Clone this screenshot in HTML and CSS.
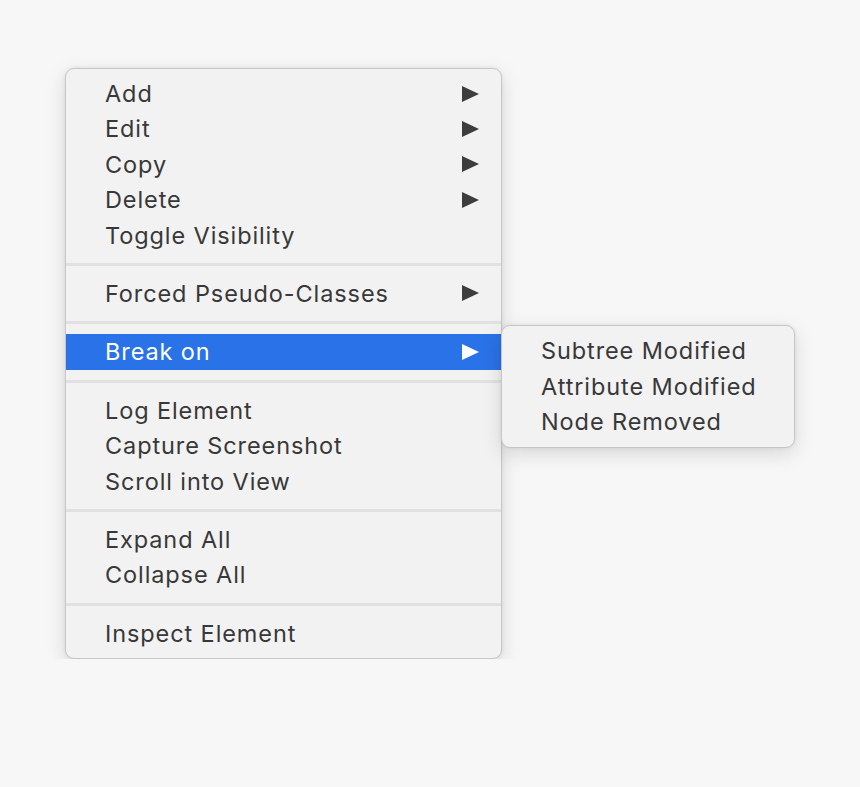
FILE: index.html
```html
<!DOCTYPE html>
<html>
<head>
<meta charset="utf-8">
<link rel="stylesheet" href="styles.css">
</head>
<body>
<div class="stage">
  <div class="menu">
    <div class="item">Add<span class="arrow"></span></div>
    <div class="item">Edit<span class="arrow"></span></div>
    <div class="item">Copy<span class="arrow"></span></div>
    <div class="item">Delete<span class="arrow"></span></div>
    <div class="item">Toggle Visibility</div>
    <div class="sep"></div>
    <div class="item">Forced Pseudo-Classes<span class="arrow"></span></div>
    <div class="sep"></div>
    <div class="item active">Break on<span class="arrow"></span>
      <div class="submenu">
        <div class="item">Subtree Modified</div>
        <div class="item">Attribute Modified</div>
        <div class="item">Node Removed</div>
      </div>
    </div>
    <div class="sep"></div>
    <div class="item">Log Element</div>
    <div class="item">Capture Screenshot</div>
    <div class="item">Scroll into View</div>
    <div class="sep"></div>
    <div class="item">Expand All</div>
    <div class="item">Collapse All</div>
    <div class="sep"></div>
    <div class="item">Inspect Element</div>
  </div>
</div>
</body>
</html>
```

FILE: styles.css
```css
html, body {
  margin: 0;
  padding: 0;
  background: #f7f7f7;
}
body {
  font-family: Inter, "Liberation Sans", sans-serif;
  color: #383838;
}
.stage {
  padding: 68px 0 0 65px;
}
.menu {
  position: relative;
  width: 435px;
  padding: 7px 0;
  background: #f2f2f2;
  border: 1px solid #c6c6c6;
  border-radius: 9px;
  box-shadow: 0 6px 20px rgba(0, 0, 0, 0.13), 0 0 4px rgba(0, 0, 0, 0.07);
}
.item {
  position: relative;
  height: 35.4px;
  line-height: 35.4px;
  padding-left: 39px;
  font-size: 23.5px;
  letter-spacing: 0.9px;
  white-space: nowrap;
}
.item.active {
  background: #2a72e7;
  color: #ffffff;
}
.arrow {
  position: absolute;
  left: 396px;
  top: 9.5px;
  width: 0;
  height: 0;
  border-top: 8.5px solid transparent;
  border-bottom: 8.5px solid transparent;
  border-left: 17px solid #3d3d3d;
}
.item.active .arrow {
  border-left-color: #ffffff;
}
.sep {
  height: 3px;
  margin: 10px 0;
  background: #e1e1e1;
}
.submenu {
  position: absolute;
  left: 435px;
  top: -9px;
  width: 292px;
  padding: 7px 0;
  background: #f2f2f2;
  border: 1px solid #c6c6c6;
  border-radius: 9px;
  box-shadow: 0 6px 20px rgba(0, 0, 0, 0.13), 0 0 4px rgba(0, 0, 0, 0.07);
  color: #383838;
}
.submenu .item {
  padding-left: 39px;
}
```
